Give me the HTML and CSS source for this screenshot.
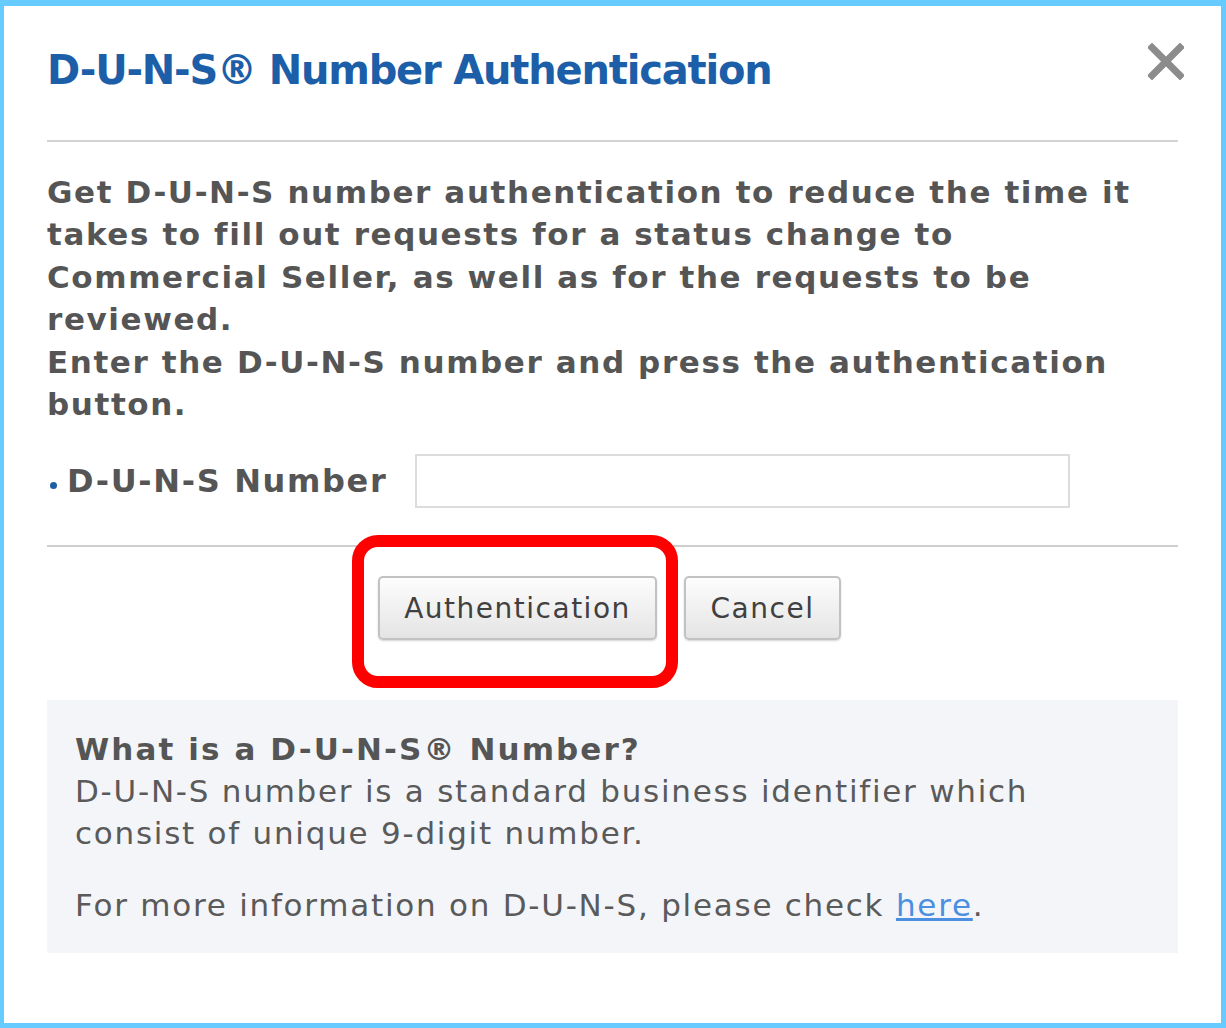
FILE: index.html
```html
<!DOCTYPE html>
<html lang="en">
<head>
<meta charset="utf-8">
<title>D-U-N-S® Number Authentication</title>
<link rel="stylesheet" href="styles.css">
</head>
<body>
<div class="dialog">
  <header class="dlg-head">
    <h1 class="dlg-title">D-U-N-S® Number Authentication</h1>
    <button class="dlg-close" type="button" aria-label="Close">
      <svg viewBox="0 0 36 36" width="36" height="37"><path d="M4 4 L32 32 M32 4 L4 32" stroke="#8c8c8c" stroke-width="7" stroke-linecap="square" fill="none"/></svg>
    </button>
  </header>

  <p class="intro">Get D-U-N-S number authentication to reduce the time it<br>takes to fill out requests for a status change to<br>Commercial Seller, as well as for the requests to be<br>reviewed.<br>Enter the D-U-N-S number and press the authentication<br>button.</p>

  <div class="field-row">
    <label class="field-label" for="duns"><span class="bullet"></span>D-U-N-S Number</label>
    <input class="field-input" id="duns" type="text">
  </div>

  <div class="divider"></div>

  <div class="actions">
    <button class="btn btn-auth" type="button">Authentication</button>
    <button class="btn btn-cancel" type="button">Cancel</button>
    <span class="highlight"></span>
  </div>

  <section class="info">
    <h2 class="info-title">What is a D-U-N-S® Number?</h2>
    <p class="info-text">D-U-N-S number is a standard business identifier which<br>consist of unique 9-digit number.</p>
    <p class="info-text info-more">For more information on D-U-N-S, please check <a href="#" class="info-link">here</a>.</p>
  </section>
</div>
</body>
</html>
```

FILE: styles.css
```css
* { box-sizing: border-box; }

html, body {
  margin: 0;
  padding: 0;
  background: #ffffff;
}

body {
  font-family: "DejaVu Sans", Verdana, sans-serif;
  color: #555555;
}

.dialog {
  width: 1226px;
  height: 1028px;
  border-style: solid;
  border-color: #66ccff;
  border-width: 6px 5px 5px 4px;
  padding: 0 43px;
  background: #ffffff;
  display: flex;
  flex-direction: column;
}

.dlg-head {
  display: flex;
  justify-content: space-between;
  align-items: flex-start;
  padding: 39px 0 45px;
  border-bottom: 2px solid #d3d3d3;
}

.dlg-title {
  margin: 0;
  font-family: "DejaVu Sans", Verdana, sans-serif;
  font-weight: bold;
  font-size: 40px;
  line-height: 50px;
  letter-spacing: -1.2px;
  color: #1c5fa8;
}

.dlg-close {
  margin: -2px -6px 0 0;
  padding: 0;
  border: 0;
  background: transparent;
  width: 36px;
  height: 37px;
  display: flex;
}

.intro {
  margin: 29px 0 0;
  font-weight: bold;
  font-size: 31px;
  line-height: 42.4px;
  letter-spacing: 1.6px;
  white-space: nowrap;
  color: #555555;
}

.field-row {
  display: flex;
  align-items: center;
  margin-top: 29px;
  height: 54px;
}

.field-label {
  display: flex;
  align-items: center;
  width: 368px;
  font-weight: bold;
  font-size: 32px;
  letter-spacing: 1.65px;
  color: #555555;
  white-space: nowrap;
}

.bullet {
  flex: none;
  width: 7px;
  height: 7px;
  border-radius: 50%;
  background: #1c5fa8;
  margin: 8px 10px 0 3px;
}

.field-input {
  width: 655px;
  height: 54px;
  border: 2px solid #dcdcdc;
  background: #ffffff;
  font-size: 26px;
  padding: 0 10px;
}

.divider {
  margin-top: 37px;
  height: 2px;
  background: #cfcfcf;
}

.actions {
  position: relative;
  display: flex;
  justify-content: center;
  gap: 27px;
  padding: 29px 6px 0 0;
}

.btn {
  height: 64px;
  padding: 0;
  border: 2px solid #c2c2c2;
  border-radius: 5px;
  background: linear-gradient(#fdfdfd, #e4e4e4);
  box-shadow: 0 1px 2px rgba(0, 0, 0, 0.18);
  font-family: "DejaVu Sans", Verdana, sans-serif;
  font-size: 28px;
  letter-spacing: 1.5px;
  color: #404040;
}

.btn-auth { width: 279px; }
.btn-cancel { width: 157px; }

.highlight {
  position: absolute;
  left: 305px;
  top: -12px;
  width: 326px;
  height: 153px;
  border: 12px solid #ff0000;
  border-radius: 26px;
  pointer-events: none;
}

.info {
  margin-top: 60px;
  background: #f3f5f9;
  padding: 28px 28px 27px;
}

.info-title {
  margin: 0;
  font-size: 31px;
  line-height: 42px;
  font-weight: bold;
  letter-spacing: 2.1px;
  color: #555555;
}

.info-text {
  margin: 0;
  font-size: 31px;
  line-height: 42px;
  letter-spacing: 1.75px;
  color: #5a5a5a;
  white-space: nowrap;
}

.info-more { margin-top: 30px; }

.info-link {
  color: #4a8fe0;
  text-decoration: underline;
}
```
